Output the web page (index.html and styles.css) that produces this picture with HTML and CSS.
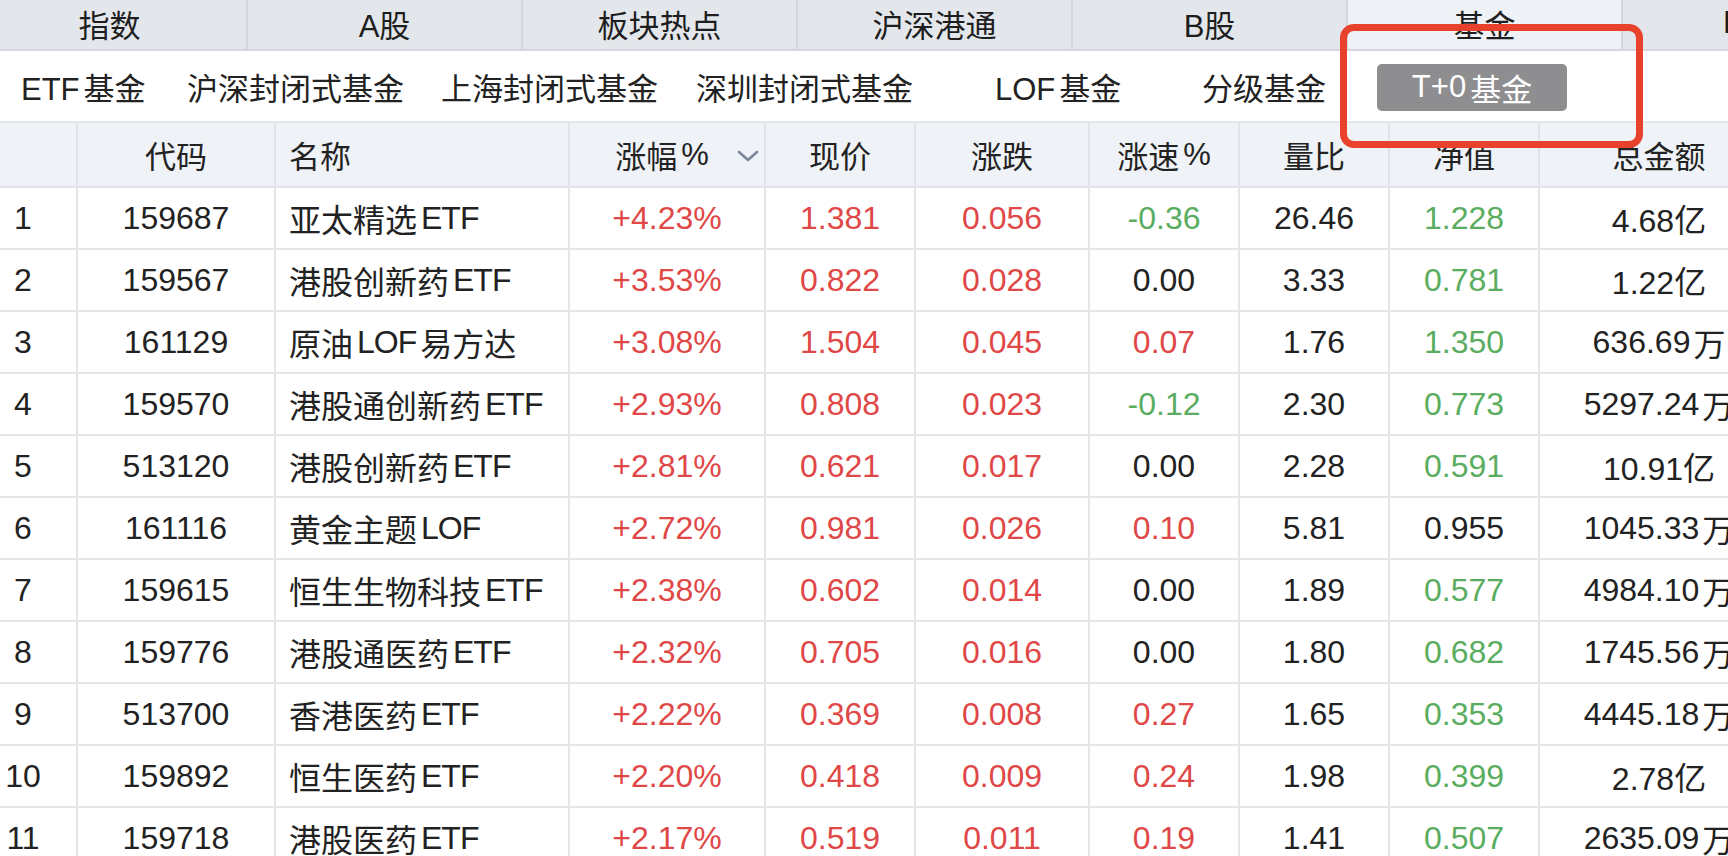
FILE: index.html
```html
<!DOCTYPE html>
<html lang="zh-CN">
<head>
<meta charset="utf-8">
<title>基金 - T+0基金</title>
<link rel="stylesheet" href="styles.css">
</head>
<body>
<div class="page">
  <nav class="topbar">
    <div class="tab">指数</div>
    <div class="tab">A股</div>
    <div class="tab">板块热点</div>
    <div class="tab">沪深港通</div>
    <div class="tab">B股</div>
    <div class="tab active">基金</div>
    <div class="tab tab-next">P</div>
  </nav>

  <div class="subbar">
    <div class="sub"><span class="sp-r">ETF</span>基金</div>
    <div class="sub">沪深封闭式基金</div>
    <div class="sub">上海封闭式基金</div>
    <div class="sub">深圳封闭式基金</div>
    <div class="sub"><span class="sp-r">LOF</span>基金</div>
    <div class="sub">分级基金</div>
    <div class="sub sub-active"><span class="sp-r">T+0</span>基金</div>
  </div>

  <div class="table">
    <div class="row head">
      <div class="cell idx"></div>
      <div class="cell">代码</div>
      <div class="cell name">名称</div>
      <div class="cell sort">涨幅<span class="sp-l">%</span>
        <svg class="chev" width="22" height="12" viewBox="0 0 22 12"><polyline points="2,2 11,10 20,2" fill="none" stroke="#7d8799" stroke-width="2.6" stroke-linecap="round" stroke-linejoin="round"/></svg>
      </div>
      <div class="cell">现价</div>
      <div class="cell">涨跌</div>
      <div class="cell">涨速<span class="sp-l">%</span></div>
      <div class="cell">量比</div>
      <div class="cell">净值</div>
      <div class="cell">总金额</div>
    </div>

    <div class="row"><div class="cell idx">1</div><div class="cell">159687</div><div class="cell name">亚太精选<span class="lat sp-l">ETF</span></div><div class="cell up">+4.23%</div><div class="cell up">1.381</div><div class="cell up">0.056</div><div class="cell down">-0.36</div><div class="cell">26.46</div><div class="cell down">1.228</div><div class="cell">4.68亿</div></div>
    <div class="row"><div class="cell idx">2</div><div class="cell">159567</div><div class="cell name">港股创新药<span class="lat sp-l">ETF</span></div><div class="cell up">+3.53%</div><div class="cell up">0.822</div><div class="cell up">0.028</div><div class="cell">0.00</div><div class="cell">3.33</div><div class="cell down">0.781</div><div class="cell">1.22亿</div></div>
    <div class="row"><div class="cell idx">3</div><div class="cell">161129</div><div class="cell name">原油<span class="lat sp-l sp-r">LOF</span>易方达</div><div class="cell up">+3.08%</div><div class="cell up">1.504</div><div class="cell up">0.045</div><div class="cell up">0.07</div><div class="cell">1.76</div><div class="cell down">1.350</div><div class="cell">636.69<span class="sp-s">万</span></div></div>
    <div class="row"><div class="cell idx">4</div><div class="cell">159570</div><div class="cell name">港股通创新药<span class="lat sp-l">ETF</span></div><div class="cell up">+2.93%</div><div class="cell up">0.808</div><div class="cell up">0.023</div><div class="cell down">-0.12</div><div class="cell">2.30</div><div class="cell down">0.773</div><div class="cell">5297.24<span class="sp-s">万</span></div></div>
    <div class="row"><div class="cell idx">5</div><div class="cell">513120</div><div class="cell name">港股创新药<span class="lat sp-l">ETF</span></div><div class="cell up">+2.81%</div><div class="cell up">0.621</div><div class="cell up">0.017</div><div class="cell">0.00</div><div class="cell">2.28</div><div class="cell down">0.591</div><div class="cell">10.91亿</div></div>
    <div class="row"><div class="cell idx">6</div><div class="cell">161116</div><div class="cell name">黄金主题<span class="lat sp-l">LOF</span></div><div class="cell up">+2.72%</div><div class="cell up">0.981</div><div class="cell up">0.026</div><div class="cell up">0.10</div><div class="cell">5.81</div><div class="cell">0.955</div><div class="cell">1045.33<span class="sp-s">万</span></div></div>
    <div class="row"><div class="cell idx">7</div><div class="cell">159615</div><div class="cell name">恒生生物科技<span class="lat sp-l">ETF</span></div><div class="cell up">+2.38%</div><div class="cell up">0.602</div><div class="cell up">0.014</div><div class="cell">0.00</div><div class="cell">1.89</div><div class="cell down">0.577</div><div class="cell">4984.10<span class="sp-s">万</span></div></div>
    <div class="row"><div class="cell idx">8</div><div class="cell">159776</div><div class="cell name">港股通医药<span class="lat sp-l">ETF</span></div><div class="cell up">+2.32%</div><div class="cell up">0.705</div><div class="cell up">0.016</div><div class="cell">0.00</div><div class="cell">1.80</div><div class="cell down">0.682</div><div class="cell">1745.56<span class="sp-s">万</span></div></div>
    <div class="row"><div class="cell idx">9</div><div class="cell">513700</div><div class="cell name">香港医药<span class="lat sp-l">ETF</span></div><div class="cell up">+2.22%</div><div class="cell up">0.369</div><div class="cell up">0.008</div><div class="cell up">0.27</div><div class="cell">1.65</div><div class="cell down">0.353</div><div class="cell">4445.18<span class="sp-s">万</span></div></div>
    <div class="row"><div class="cell idx">10</div><div class="cell">159892</div><div class="cell name">恒生医药<span class="lat sp-l">ETF</span></div><div class="cell up">+2.20%</div><div class="cell up">0.418</div><div class="cell up">0.009</div><div class="cell up">0.24</div><div class="cell">1.98</div><div class="cell down">0.399</div><div class="cell">2.78亿</div></div>
    <div class="row"><div class="cell idx">11</div><div class="cell">159718</div><div class="cell name">港股医药<span class="lat sp-l">ETF</span></div><div class="cell up">+2.17%</div><div class="cell up">0.519</div><div class="cell up">0.011</div><div class="cell up">0.19</div><div class="cell">1.41</div><div class="cell down">0.507</div><div class="cell">2635.09<span class="sp-s">万</span></div></div>
  </div>

  <div class="highlight"></div>
</div>
</body>
</html>
```

FILE: styles.css
```css
html, body {
  margin: 0;
  padding: 0;
  background: #ffffff;
}

body {
  width: 1728px;
  height: 856px;
  overflow: hidden;
  font-family: "Liberation Sans", "Noto Sans CJK SC", sans-serif;
  color: #222222;
}

.page {
  position: relative;
  width: 1728px;
  height: 856px;
  overflow: hidden;
}

/* spacing between Latin and CJK runs */
.sp-l {
  margin-left: 4px;
}

.sp-r {
  margin-right: 4px;
}

.sp-s {
  margin-left: 3px;
}

.lat {
  letter-spacing: -1px;
}

/* top category tabs */
.topbar {
  display: flex;
  height: 49px;
  margin-left: -27px;
  width: 1900px;
  background: #e3e7ec;
  border-bottom: 2px solid #d4d8de;
}

.tab {
  flex: 0 0 275px;
  box-sizing: border-box;
  border-right: 2px solid #d3d7dd;
  display: flex;
  align-items: center;
  justify-content: center;
  font-size: 31px;
  color: #1e1e1e;
  padding-bottom: 3px;
}

.tab.active {
  background: #eef1f5;
}

.tab.tab-next {
  justify-content: flex-start;
  padding-left: 100px;
}

/* sub category row */
.subbar {
  display: grid;
  grid-template-columns: 166px 254px 255px 299px 207px 175px 190px;
  align-items: center;
  height: 70px;
  padding-left: 21px;
  border-bottom: 2px solid #e4e6e9;
  font-size: 31px;
  color: #222222;
}

.sub {
  white-space: nowrap;
}

.sub-active {
  height: 47px;
  background: #8e8e91;
  color: #ffffff;
  border-radius: 5px;
  display: flex;
  align-items: center;
  justify-content: center;
  margin-top: 2px;
}

/* table */
.table {
  width: 1780px;
}

.row {
  display: grid;
  grid-template-columns: 78px 198px 294px 196px 150px 174px 150px 150px 150px 240px;
  height: 62px;
  box-sizing: border-box;
  border-bottom: 2px solid #e6e6e6;
}

.row.head {
  height: 65px;
  background: #eff2f6;
  border-bottom: 2px solid #e2e4e8;
}

.cell {
  position: relative;
  box-sizing: border-box;
  border-right: 2px solid #e6e6e6;
  display: flex;
  align-items: center;
  justify-content: center;
  font-size: 32px;
  white-space: nowrap;
}

.head .cell {
  font-size: 31px;
  color: #222222;
  border-right-color: #e0e3e7;
}

.cell.idx {
  padding-right: 30px;
}

.cell.name {
  justify-content: flex-start;
  padding-left: 13px;
}

.cell.sort {
  padding-right: 10px;
}

.chev {
  position: absolute;
  right: 5px;
  top: 27px;
}

.up {
  color: #e04747;
}

.down {
  color: #5aad5f;
}

/* annotation box drawn over the screenshot */
.highlight {
  position: absolute;
  left: 1340px;
  top: 24px;
  width: 303px;
  height: 124px;
  box-sizing: border-box;
  border: 7px solid #e8412c;
  border-radius: 14px;
}
```
